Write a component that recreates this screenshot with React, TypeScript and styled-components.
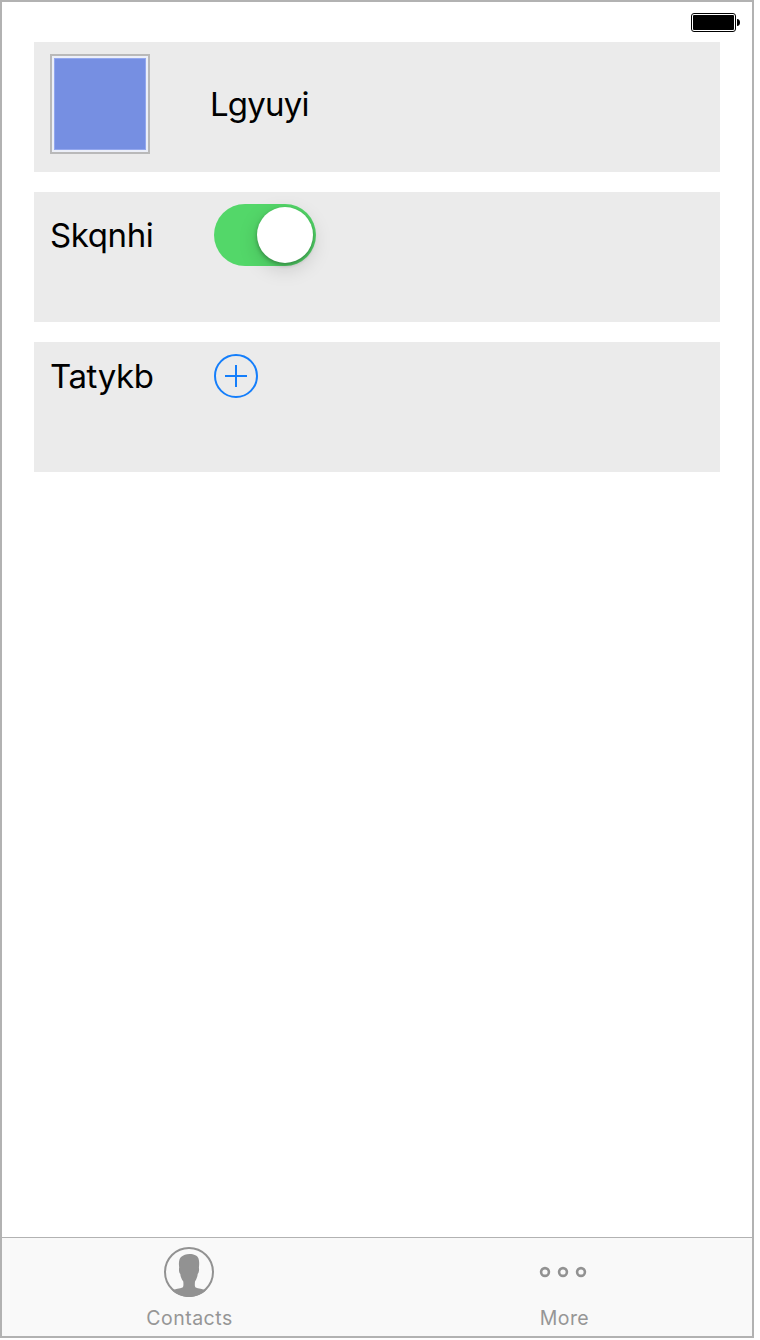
import React from "react";
import styled, { createGlobalStyle } from "styled-components";

const GlobalStyle = createGlobalStyle`
  * { box-sizing: border-box; }
  body { margin: 0; background: #fff; font-family: Inter, "Liberation Sans", sans-serif; }
`;

const Screen = styled.main`
  display: flex;
  flex-direction: column;
  width: 754px;
  height: 1338px;
  border: 2px solid #b2b2b2;
  background: #fff;
`;

const StatusBar = styled.header`
  display: flex;
  justify-content: flex-end;
  height: 40px;
  padding: 11px 12px 0 0;
`;

const Content = styled.section`
  display: flex;
  flex: 1;
  flex-direction: column;
  gap: 20px;
  padding: 0 32px;
`;

const Row = styled.div`
  display: flex;
  align-items: flex-start;
  height: 130px;
  padding: 12px 16px;
  background: #ebebeb;
`;

const Swatch = styled.div`
  width: 100px;
  height: 100px;
  margin-right: 60px;
  padding: 2px;
  border: 2px solid #b9b9b9;
  background: #eceff8;
`;

const SwatchFill = styled.div`
  height: 100%;
  background: #768fe2;
  box-shadow: inset 0 0 0 1px #93a7ee;
`;

const Label = styled.span<{ $width?: number; $height: number; $spacing: number }>`
  width: ${(p) => (p.$width ? `${p.$width}px` : "auto")};
  font-size: 33px;
  line-height: ${(p) => p.$height}px;
  letter-spacing: ${(p) => p.$spacing}px;
  color: #000;
  white-space: nowrap;
`;

const Toggle = styled.button`
  display: flex;
  justify-content: flex-end;
  width: 102px;
  height: 62px;
  padding: 3px;
  border: 0;
  border-radius: 31px;
  background: #53d769;
`;

const Knob = styled.span`
  width: 56px;
  height: 56px;
  border-radius: 50%;
  background: #fff;
  box-shadow: 0 6px 20px rgba(0, 0, 0, 0.15), 0 2px 4px rgba(0, 0, 0, 0.3);
`;

const AddButton = styled.button`
  display: flex;
  padding: 0;
  border: 0;
  background: none;
`;

const TabBar = styled.nav`
  display: flex;
  height: 99px;
  border-top: 1px solid #b2b2b2;
  background: #f9f9f9;
`;

const Tab = styled.div`
  display: flex;
  flex: 1;
  flex-direction: column;
  align-items: center;
  padding-top: 9px;
`;

const TabIcon = styled.svg`
  display: block;
  width: 50px;
  height: 50px;
  margin-right: 1px;
`;

const TabLabel = styled.span<{ $spacing: number }>`
  margin-top: 9px;
  font-size: 19.5px;
  line-height: 24px;
  letter-spacing: ${(p) => p.$spacing}px;
  color: #969696;
`;

export default function App() {
  return (
    <>
      <GlobalStyle />
      <Screen>
        <StatusBar>
          <svg width="49" height="19" viewBox="0 0 49 19">
            <rect x="0.5" y="0.5" width="44" height="18" rx="2.5" fill="none" stroke="#000" />
            <rect x="2" y="2" width="41" height="15" rx="1" />
            <path d="M46 6c2 0 3 1.500 3 3.500S48 13 46 13Z" />
          </svg>
        </StatusBar>
        <Content>
          <Row>
            <Swatch><SwatchFill /></Swatch>
            <Label $height={100} $spacing={-0.8}>Lgyuyi</Label>
          </Row>
          <Row>
            <Label $width={164} $height={62} $spacing={-0.4}>Skqnhi</Label>
            <Toggle aria-label="Skqnhi"><Knob /></Toggle>
          </Row>
          <Row>
            <Label $width={164} $height={44} $spacing={-0.4}>Tatykb</Label>
            <AddButton aria-label="Tatykb">
              <svg width="44" height="44" viewBox="0 0 44 44" fill="none" stroke="#147efb" strokeWidth="2">
                <circle cx="22" cy="22" r="21" />
                <path d="M11 22h22M22 11v22" />
              </svg>
            </AddButton>
          </Row>
        </Content>
        <TabBar>
          <Tab>
            <TabIcon viewBox="0 0 50 50">
              <circle cx="25" cy="25" r="24" fill="none" stroke="#929292" strokeWidth="2" />
              <path
                fill="#929292"
                d="M8 43.500C11 42 16 41.500 18.500 40.500C19.700 39.500 19.500 37 19.300 34.500C17.500 32 16.500 29.500 16.300 27C15 26 14.700 22.500 15.200 20.500C14.500 16 15 12 17 10C19.500 8 22 7 25.500 7C30 7 33.500 8.500 34.500 11.500C35.500 14.500 35.200 18 34.900 20.500C35.400 22.500 34.800 26 33.700 27C33.500 29.500 32.500 32 31 34.500C30.800 37 30.500 39.500 31.700 40.500C34 41.500 39 42 42 43.500C37 47.500 31 50 25 50C19 50 13 47.500 8 43.500Z"
              />
            </TabIcon>
            <TabLabel $spacing={0.5}>Contacts</TabLabel>
          </Tab>
          <Tab>
            <TabIcon viewBox="0 0 50 50" fill="none" stroke="#929292" strokeWidth="2.6">
              <circle cx="6" cy="25" r="3.900" />
              <circle cx="24" cy="25" r="3.900" />
              <circle cx="42" cy="25" r="3.900" />
            </TabIcon>
            <TabLabel $spacing={0.4}>More</TabLabel>
          </Tab>
        </TabBar>
      </Screen>
    </>
  );
}
